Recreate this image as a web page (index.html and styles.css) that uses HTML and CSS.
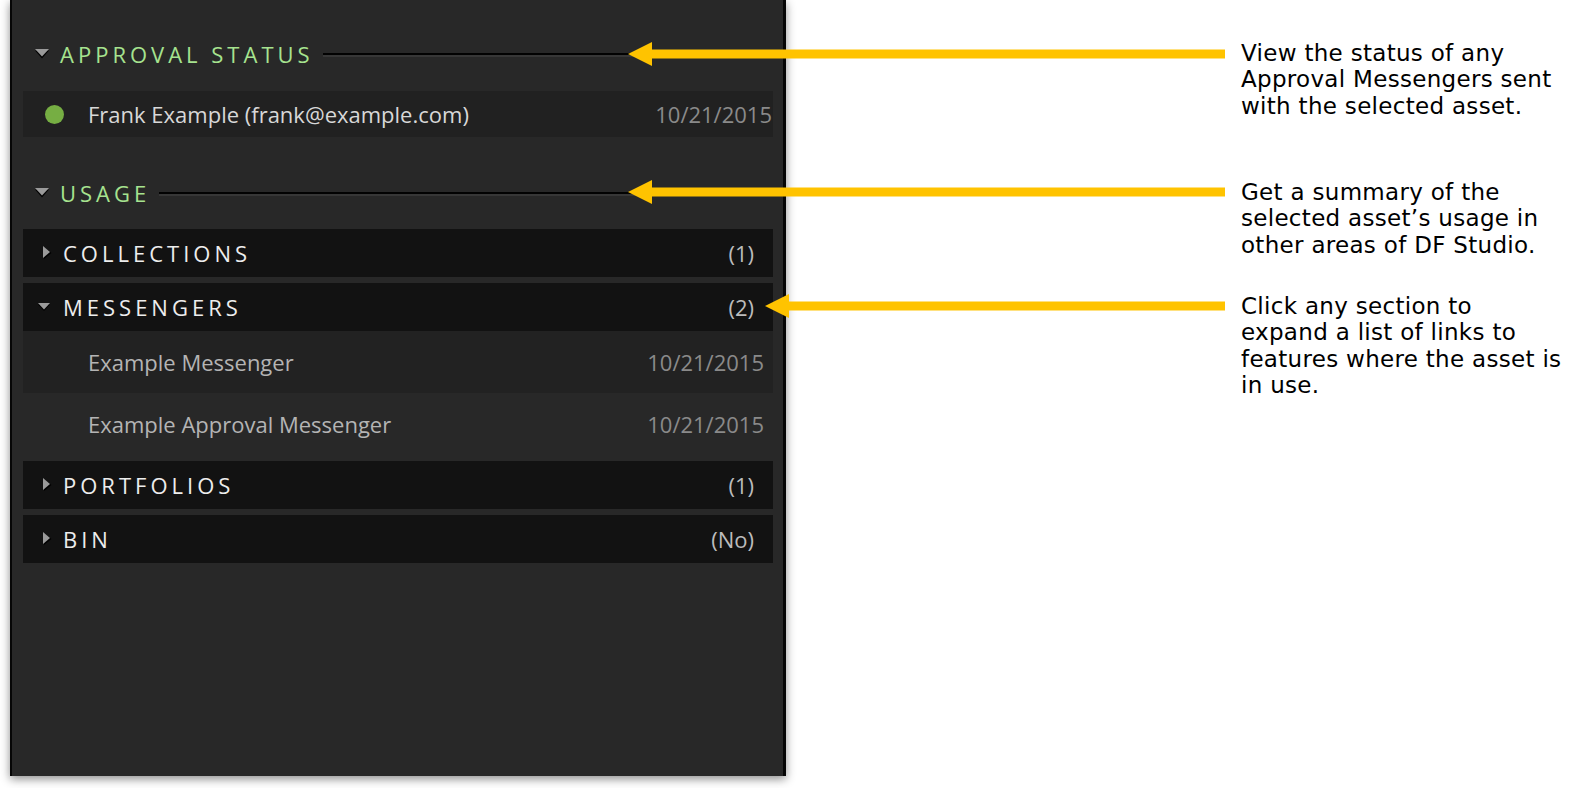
FILE: index.html
```html
<!DOCTYPE html>
<html>
<head>
<meta charset="utf-8">
<link rel="stylesheet" href="styles.css">
</head>
<body>
<div class="page">
  <div class="panel">
    <div class="sec-head sec-approval">
      <svg class="tri-down" width="14" height="10" viewBox="0 0 14 10"><polygon points="0,1.5 14,1.5 7,9.5" fill="#000"/><polygon points="0,0 14,0 7,7.5" fill="#9a9a9a"/></svg>
      <span class="sec-title">APPROVAL STATUS</span>
      <span class="sec-line"></span>
    </div>
    <div class="approval-row">
      <span class="dot"></span>
      <span class="row-name">Frank Example (frank@example.com)</span>
      <span class="row-date">10/21/2015</span>
    </div>

    <div class="sec-head sec-usage">
      <svg class="tri-down" width="14" height="10" viewBox="0 0 14 10"><polygon points="0,1.5 14,1.5 7,9.5" fill="#000"/><polygon points="0,0 14,0 7,7.5" fill="#9a9a9a"/></svg>
      <span class="sec-title">USAGE</span>
      <span class="sec-line"></span>
    </div>

    <div class="group">
      <div class="bar">
        <svg class="tri-right" width="9" height="14" viewBox="0 0 9 14"><polygon points="1,1 8.5,7 1,13" fill="#000"/><polygon points="0,0 7,6 0,12" fill="#9a9a9a"/></svg>
        <span class="bar-title">COLLECTIONS</span>
        <span class="bar-count">(1)</span>
      </div>
    </div>

    <div class="group">
      <div class="bar">
        <svg class="tri-down small" width="12" height="9" viewBox="0 0 12 9"><polygon points="0,1.5 12,1.5 6,8" fill="#000"/><polygon points="0,0 12,0 6,6.5" fill="#9a9a9a"/></svg>
        <span class="bar-title">MESSENGERS</span>
        <span class="bar-count">(2)</span>
      </div>
      <div class="sub sub-odd">
        <span class="sub-name">Example Messenger</span>
        <span class="sub-date">10/21/2015</span>
      </div>
      <div class="sub">
        <span class="sub-name">Example Approval Messenger</span>
        <span class="sub-date">10/21/2015</span>
      </div>
    </div>

    <div class="group">
      <div class="bar">
        <svg class="tri-right" width="9" height="14" viewBox="0 0 9 14"><polygon points="1,1 8.5,7 1,13" fill="#000"/><polygon points="0,0 7,6 0,12" fill="#9a9a9a"/></svg>
        <span class="bar-title">PORTFOLIOS</span>
        <span class="bar-count">(1)</span>
      </div>
    </div>

    <div class="group">
      <div class="bar">
        <svg class="tri-right" width="9" height="14" viewBox="0 0 9 14"><polygon points="1,1 8.5,7 1,13" fill="#000"/><polygon points="0,0 7,6 0,12" fill="#9a9a9a"/></svg>
        <span class="bar-title">BIN</span>
        <span class="bar-count">(No)</span>
      </div>
    </div>
  </div>

  <div class="notes">
    <p class="note note-1">View the status of any<br>Approval Messengers sent<br>with the selected asset.</p>
    <p class="note note-2">Get a summary of the<br>selected asset’s usage in<br>other areas of DF Studio.</p>
    <p class="note note-3">Click any section to<br>expand a list of links to<br>features where the asset is<br>in use.</p>
  </div>

  <svg class="arrows" width="1580" height="788" viewBox="0 0 1580 788">
    <g fill="#ffc300">
      <rect x="650" y="49.5" width="575" height="9"/>
      <polygon points="628,54 652,42 652,66"/>
      <rect x="650" y="187.5" width="575" height="9"/>
      <polygon points="628,192 652,180 652,204"/>
      <rect x="787" y="301.5" width="438" height="9"/>
      <polygon points="765,306 789,294 789,318"/>
    </g>
  </svg>
</div>
</body>
</html>
```

FILE: styles.css
```css
html, body {
  margin: 0;
  padding: 0;
  background: #ffffff;
}

.page {
  position: relative;
  width: 1580px;
  height: 788px;
  display: flex;
  align-items: flex-start;
  overflow: hidden;
}

.panel {
  box-sizing: content-box;
  width: 771px;
  height: 776px;
  margin-left: 10px;
  background: #282828;
  border-left: 2px solid #060606;
  border-right: 3px solid #060606;
  box-shadow: 0 3px 9px rgba(0, 0, 0, 0.45);
  display: flex;
  flex-direction: column;
  font-family: "Open Sans", "Liberation Sans", sans-serif;
  flex-shrink: 0;
}

.sec-head {
  height: 30px;
  display: flex;
  align-items: center;
  padding-left: 11px;
}

.sec-approval {
  margin-top: 39px;
}

.sec-usage {
  margin-top: 41px;
}

.tri-down {
  display: block;
  margin-left: 12px;
  flex-shrink: 0;
}

.sec-title {
  margin-left: 11px;
  font-size: 22px;
  letter-spacing: 4px;
  color: #a6e38f;
  line-height: 30px;
}

.sec-line {
  flex: 1;
  height: 2px;
  background: #020202;
  border-bottom: 2px solid #373737;
  margin-left: 9px;
  margin-right: 10px;
  margin-top: 1px;
}

.approval-row {
  margin: 22px 10px 0 11px;
  height: 46px;
  background: #212121;
  display: flex;
  align-items: center;
}

.dot {
  width: 19px;
  height: 19px;
  border-radius: 50%;
  background: #76ae43;
  margin-left: 22px;
  flex-shrink: 0;
}

.row-name {
  margin-left: 24px;
  font-size: 22px;
  color: #d8d8d8;
  flex: 1;
}

.row-date {
  font-size: 22px;
  color: #8a8a8a;
  margin-right: 1px;
}

.group {
  margin: 0 10px 6px 11px;
}

.sec-usage + .group {
  margin-top: 21px;
}

.bar {
  height: 48px;
  background: #121212;
  display: flex;
  align-items: center;
}

.tri-right {
  display: block;
  margin-left: 20px;
  flex-shrink: 0;
}

.tri-right + .bar-title {
  margin-left: 11px;
}

.tri-down.small {
  margin-left: 15px;
}

.tri-down.small + .bar-title {
  margin-left: 13px;
}

.bar-title {
  font-size: 22px;
  letter-spacing: 4px;
  color: #ededed;
  flex: 1;
}

.bar-count {
  font-size: 22px;
  color: #bcbcbc;
  margin-right: 19px;
}

.sub {
  height: 62px;
  display: flex;
  align-items: center;
  padding-left: 65px;
  padding-right: 9px;
}

.sub-odd {
  background: #222222;
}

.sub-name {
  flex: 1;
  font-size: 22px;
  color: #b4b4b4;
}

.sub-date {
  font-size: 22px;
  color: #8a8a8a;
}

.notes {
  margin-left: 455px;
  padding-top: 39.5px;
  font-family: "DejaVu Sans", Verdana, sans-serif;
  font-size: 23px;
  letter-spacing: 0.3px;
  line-height: 26.6px;
  color: #000000;
}

.note {
  margin: 0;
  white-space: nowrap;
}

.note-2 {
  margin-top: 59.5px;
}

.note-3 {
  margin-top: 34px;
}

.arrows {
  position: absolute;
  left: 0;
  top: 0;
  pointer-events: none;
}
```
